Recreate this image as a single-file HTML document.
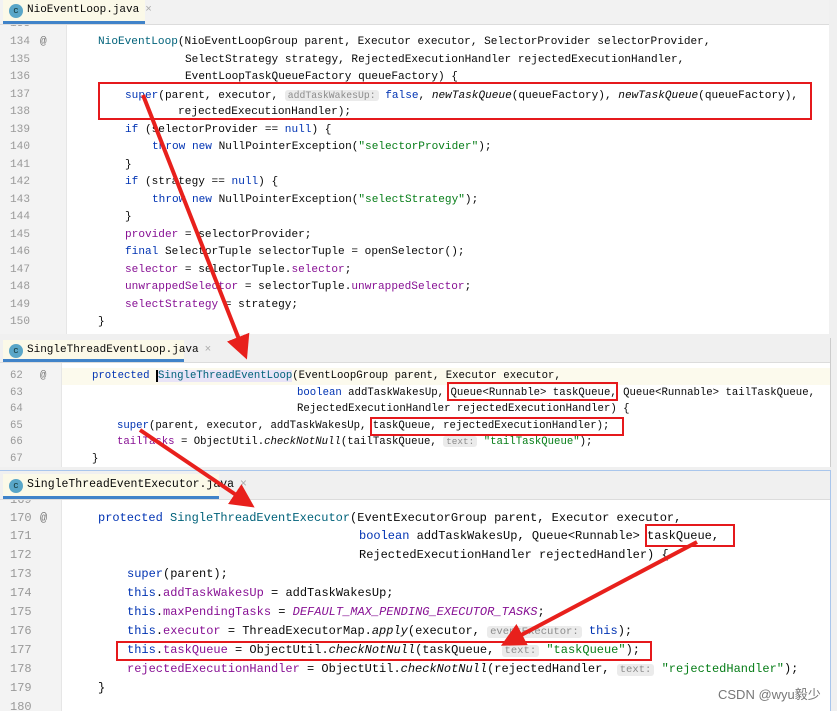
<!DOCTYPE html>
<html><head><meta charset="utf-8"><style>
*{margin:0;padding:0;box-sizing:border-box}
body{width:837px;height:711px;background:#f0f0f0;position:relative;overflow:hidden;font-family:"Liberation Mono",monospace;color:#080808}
.p{position:absolute;left:0;background:#fff;overflow:hidden}
.tabbar{position:absolute;left:0;right:0;top:0;background:#f2f2f2;border-bottom:1px solid #dcdcdc;z-index:2}
.tab{position:absolute;left:3px;top:0;bottom:0;background:#fbf9e8;border-bottom:3px solid #4083c9;font-size:11px;padding-left:24px;line-height:21px;white-space:nowrap}
.tab .ic{position:absolute;left:6px;top:4px;width:14px;height:14px;border-radius:50%;background:#59a6c8;color:#133;font-size:9px;line-height:14px;text-align:center}
.tab .x{color:#aaa;margin-left:6px}
.gut{position:absolute;left:0;top:0;bottom:0;background:#f3f3f3;border-right:1px solid #e6e6e6}
.ln{position:absolute;left:0;width:100%;white-space:pre;color:#999}
.ln .n{position:absolute;left:10px}
.ln .at{position:absolute;left:40px;color:#777}
.cl{position:absolute;white-space:pre}
.k{color:#0033b3}.f{color:#871094}.s{color:#067d17}.m{color:#00627a}.i{font-style:italic}
.h{background:#ebebeb;color:#8c8c8c;border-radius:3px;padding:0 3px;font-size:0.88em}
.box{position:absolute;border:2px solid #e5191c;z-index:3}
.hl{position:absolute;left:0;right:0;background:#fcfaed}
</style></head><body>

<!-- Panel 1 -->
<div class="p" style="top:0;width:829px;height:334px;font-size:11.1px">
 <div class="gut" style="width:67px"></div>
 <div style="position:absolute;left:0;right:0;top:25px;bottom:0;line-height:17.55px">
  <div class="ln" style="top:-9px"><span class="n">133</span></div>
  <div class="ln" style="top:9px"><span class="n">134</span><span class="at">@</span></div>
  <div class="ln" style="top:26.5px"><span class="n">135</span></div>
  <div class="ln" style="top:44px"><span class="n">136</span></div>
  <div class="ln" style="top:61.5px"><span class="n">137</span></div>
  <div class="ln" style="top:79px"><span class="n">138</span></div>
  <div class="ln" style="top:96.5px"><span class="n">139</span></div>
  <div class="ln" style="top:114px"><span class="n">140</span></div>
  <div class="ln" style="top:131.5px"><span class="n">141</span></div>
  <div class="ln" style="top:149px"><span class="n">142</span></div>
  <div class="ln" style="top:166.5px"><span class="n">143</span></div>
  <div class="ln" style="top:184px"><span class="n">144</span></div>
  <div class="ln" style="top:201.5px"><span class="n">145</span></div>
  <div class="ln" style="top:219px"><span class="n">146</span></div>
  <div class="ln" style="top:236.5px"><span class="n">147</span></div>
  <div class="ln" style="top:254px"><span class="n">148</span></div>
  <div class="ln" style="top:271.5px"><span class="n">149</span></div>
  <div class="ln" style="top:289px"><span class="n">150</span></div>
  <div class="cl" style="left:98px;top:9px"><span class="m">NioEventLoop</span>(NioEventLoopGroup parent, Executor executor, SelectorProvider selectorProvider,</div>
  <div class="cl" style="left:185px;top:26.5px">SelectStrategy strategy, RejectedExecutionHandler rejectedExecutionHandler,</div>
  <div class="cl" style="left:185px;top:44px">EventLoopTaskQueueFactory queueFactory) {</div>
  <div class="cl" style="left:125px;top:61.5px"><span class="k">super</span>(parent, executor, <span class="h">addTaskWakesUp:</span> <span class="k">false</span>, <span class="i">newTaskQueue</span>(queueFactory), <span class="i">newTaskQueue</span>(queueFactory),</div>
  <div class="cl" style="left:178px;top:79px">rejectedExecutionHandler);</div>
  <div class="cl" style="left:125px;top:96.5px"><span class="k">if</span> (selectorProvider == <span class="k">null</span>) {</div>
  <div class="cl" style="left:152px;top:114px"><span class="k">throw new</span> NullPointerException(<span class="s">"selectorProvider"</span>);</div>
  <div class="cl" style="left:125px;top:131.5px">}</div>
  <div class="cl" style="left:125px;top:149px"><span class="k">if</span> (strategy == <span class="k">null</span>) {</div>
  <div class="cl" style="left:152px;top:166.5px"><span class="k">throw new</span> NullPointerException(<span class="s">"selectStrategy"</span>);</div>
  <div class="cl" style="left:125px;top:184px">}</div>
  <div class="cl" style="left:125px;top:201.5px"><span class="f">provider</span> = selectorProvider;</div>
  <div class="cl" style="left:125px;top:219px"><span class="k">final</span> SelectorTuple selectorTuple = openSelector();</div>
  <div class="cl" style="left:125px;top:236.5px"><span class="f">selector</span> = selectorTuple.<span class="f">selector</span>;</div>
  <div class="cl" style="left:125px;top:254px"><span class="f">unwrappedSelector</span> = selectorTuple.<span class="f">unwrappedSelector</span>;</div>
  <div class="cl" style="left:125px;top:271.5px"><span class="f">selectStrategy</span> = strategy;</div>
  <div class="cl" style="left:98px;top:289px">}</div>
 </div>
 <div class="tabbar" style="height:25px"><div class="tab" style="width:142px"><span class="ic">c</span>NioEventLoop.java<span class="x">×</span></div></div>
 <div class="box" style="left:98px;top:82px;width:714px;height:38px"></div>
</div>

<!-- Panel 2 -->
<div class="p" style="top:338px;width:831px;height:129px;font-size:10.67px;border-right:1px solid #ccc">
 <div class="gut" style="width:62px"></div>
 <div style="position:absolute;left:0;right:0;top:25px;bottom:0;line-height:16.6px">
  <div class="hl" style="top:5px;height:16.6px;left:62px"></div>
  <div class="ln" style="top:-11.6px"><span class="n">61</span></div>
  <div class="ln" style="top:5px"><span class="n">62</span><span class="at">@</span></div>
  <div class="ln" style="top:21.6px"><span class="n">63</span></div>
  <div class="ln" style="top:38.2px"><span class="n">64</span></div>
  <div class="ln" style="top:54.8px"><span class="n">65</span></div>
  <div class="ln" style="top:71.4px"><span class="n">66</span></div>
  <div class="ln" style="top:88px"><span class="n">67</span></div>
  <div class="cl" style="left:92px;top:5px"><span class="k">protected</span> <span class="m" style="background:#e9e4f7;border-left:2px solid #000">SingleThreadEventLoop</span>(EventLoopGroup parent, Executor executor,</div>
  <div class="cl" style="left:297px;top:21.6px"><span class="k">boolean</span> addTaskWakesUp, Queue&lt;Runnable&gt; taskQueue, Queue&lt;Runnable&gt; tailTaskQueue,</div>
  <div class="cl" style="left:297px;top:38.2px">RejectedExecutionHandler rejectedExecutionHandler) {</div>
  <div class="cl" style="left:117px;top:54.8px"><span class="k">super</span>(parent, executor, addTaskWakesUp, taskQueue, rejectedExecutionHandler);</div>
  <div class="cl" style="left:117px;top:71.4px"><span class="f">tailTasks</span> = ObjectUtil.<span class="i">checkNotNull</span>(tailTaskQueue, <span class="h">text:</span> <span class="s">"tailTaskQueue"</span>);</div>
  <div class="cl" style="left:92px;top:88px">}</div>
 </div>
 <div class="tabbar" style="height:25px;background:#f0f0f0"><div class="tab" style="width:181px;top:2px"><span class="ic">c</span>SingleThreadEventLoop.java<span class="x">×</span></div></div>
 <div class="box" style="left:447px;top:44px;width:171px;height:19px"></div>
 <div class="box" style="left:370px;top:79px;width:254px;height:19px"></div>
</div>

<!-- Panel 3 -->
<div class="p" style="top:470px;width:831px;height:241px;font-size:12px;border:1px solid #a9c6ec;border-left:none;border-bottom:none">
 <div class="gut" style="width:62px"></div>
 <div style="position:absolute;left:0;right:0;top:29px;bottom:0;line-height:18.9px">
  <div class="ln" style="top:-9px"><span class="n">169</span></div>
  <div class="ln" style="top:8.5px"><span class="n">170</span><span class="at">@</span></div>
  <div class="ln" style="top:27.4px"><span class="n">171</span></div>
  <div class="ln" style="top:46.3px"><span class="n">172</span></div>
  <div class="ln" style="top:65.2px"><span class="n">173</span></div>
  <div class="ln" style="top:84.1px"><span class="n">174</span></div>
  <div class="ln" style="top:103px"><span class="n">175</span></div>
  <div class="ln" style="top:121.9px"><span class="n">176</span></div>
  <div class="ln" style="top:140.8px"><span class="n">177</span></div>
  <div class="ln" style="top:159.7px"><span class="n">178</span></div>
  <div class="ln" style="top:178.6px"><span class="n">179</span></div>
  <div class="ln" style="top:197.5px"><span class="n">180</span></div>
  <div class="cl" style="left:98px;top:8.5px"><span class="k">protected</span> <span class="m">SingleThreadEventExecutor</span>(EventExecutorGroup parent, Executor executor,</div>
  <div class="cl" style="left:359px;top:27.4px"><span class="k">boolean</span> addTaskWakesUp, Queue&lt;Runnable&gt; taskQueue,</div>
  <div class="cl" style="left:359px;top:46.3px">RejectedExecutionHandler rejectedHandler) {</div>
  <div class="cl" style="left:127px;top:65.2px"><span class="k">super</span>(parent);</div>
  <div class="cl" style="left:127px;top:84.1px"><span class="k">this</span>.<span class="f">addTaskWakesUp</span> = addTaskWakesUp;</div>
  <div class="cl" style="left:127px;top:103px"><span class="k">this</span>.<span class="f">maxPendingTasks</span> = <span class="f i">DEFAULT_MAX_PENDING_EXECUTOR_TASKS</span>;</div>
  <div class="cl" style="left:127px;top:121.9px"><span class="k">this</span>.<span class="f">executor</span> = ThreadExecutorMap.<span class="i">apply</span>(executor, <span class="h">eventExecutor:</span> <span class="k">this</span>);</div>
  <div class="cl" style="left:127px;top:140.8px"><span class="k">this</span>.<span class="f">taskQueue</span> = ObjectUtil.<span class="i">checkNotNull</span>(taskQueue, <span class="h">text:</span> <span class="s">"taskQueue"</span>);</div>
  <div class="cl" style="left:127px;top:159.7px"><span class="f">rejectedExecutionHandler</span> = ObjectUtil.<span class="i">checkNotNull</span>(rejectedHandler, <span class="h">text:</span> <span class="s">"rejectedHandler"</span>);</div>
  <div class="cl" style="left:98px;top:178.6px">}</div>
 </div>
 <div class="tabbar" style="height:29px;background:#f0f0f0"><div class="tab" style="width:216px;top:3px;font-size:11.5px;line-height:22px"><span class="ic" style="top:5px">c</span>SingleThreadEventExecutor.java<span class="x">×</span></div></div>
 <div class="box" style="left:645px;top:53px;width:90px;height:23px"></div>
 <div class="box" style="left:116px;top:170px;width:536px;height:20px"></div>
 <div style="position:absolute;left:718px;top:213px;font-family:'Liberation Sans','Noto Sans CJK SC',sans-serif;font-size:13px;color:#777">CSDN @wyu毅少</div>
</div>

<!-- arrows -->
<svg width="837" height="711" style="position:absolute;left:0;top:0;z-index:10">
 <defs><marker id="a" markerWidth="6" markerHeight="6" refX="4" refY="3" orient="auto"><path d="M0,0 L6,3 L0,6 z" fill="#e8201c"/></marker></defs>
 <g stroke="#e8201c" stroke-width="4" fill="none">
  <line x1="143" y1="95" x2="244" y2="352" marker-end="url(#a)"/>
  <line x1="140" y1="430" x2="248" y2="503" marker-end="url(#a)"/>
  <line x1="697" y1="542" x2="508" y2="642" marker-end="url(#a)"/>
 </g>
</svg>
</body></html>
